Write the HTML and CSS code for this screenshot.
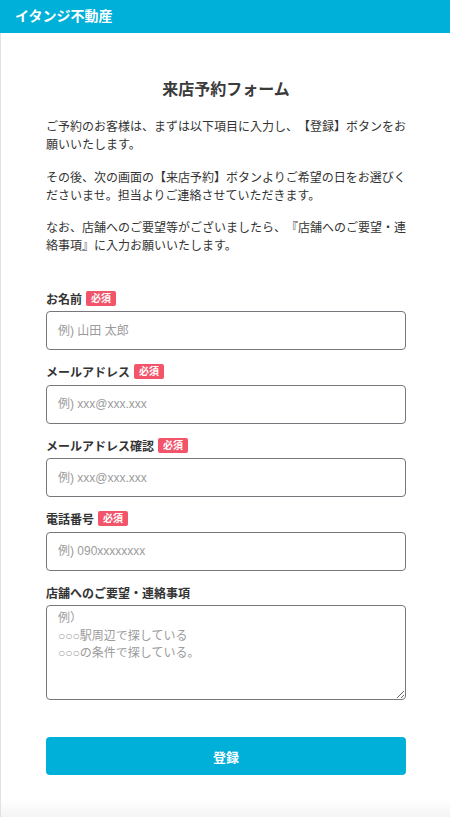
FILE: index.html
```html
<!DOCTYPE html>
<html lang="ja">
<head>
    <meta charset="UTF-8">
    <meta name="viewport" content="width=device-width, initial-scale=1.0">
    <title>来店予約フォーム | イタンジ不動産</title>
    <link rel="stylesheet" href="styles.css">
</head>
<body>
    <header class="site-header">イタンジ不動産</header>

    <main class="page">
        <div class="form-wrap">
            <h1 class="form-title">来店予約フォーム</h1>

            <div class="intro">
                <p>ご予約のお客様は、まずは以下項目に入力し、【登録】ボタンをお願いいたします。</p>
                <p>その後、次の画面の【来店予約】ボタンよりご希望の日をお選びくださいませ。担当よりご連絡させていただきます。</p>
                <p>なお、店舗へのご要望等がございましたら、『店舗へのご要望・連絡事項』に入力お願いいたします。</p>
            </div>

            <form class="form">
                <div class="field">
                    <label class="field-label" for="name">お名前<span class="badge">必須</span></label>
                    <input class="field-input" type="text" id="name" placeholder="例) 山田 太郎">
                </div>
                <div class="field">
                    <label class="field-label" for="email">メールアドレス<span class="badge">必須</span></label>
                    <input class="field-input" type="email" id="email" placeholder="例) xxx@xxx.xxx">
                </div>
                <div class="field">
                    <label class="field-label" for="email-confirm">メールアドレス確認<span class="badge">必須</span></label>
                    <input class="field-input" type="email" id="email-confirm" placeholder="例) xxx@xxx.xxx">
                </div>
                <div class="field">
                    <label class="field-label" for="tel">電話番号<span class="badge">必須</span></label>
                    <input class="field-input" type="tel" id="tel" placeholder="例) 090xxxxxxxx">
                </div>
                <div class="field">
                    <label class="field-label" for="note">店舗へのご要望・連絡事項</label>
                    <textarea class="field-input field-textarea" id="note" placeholder="例）&#10;○○○駅周辺で探している&#10;○○○の条件で探している。"></textarea>
                </div>

                <button class="submit" type="button">登録</button>
            </form>
        </div>
    </main>

    <div class="page-bottom"></div>
</body>
</html>
```

FILE: styles.css
```css
html, body {
    margin: 0;
    padding: 0;
}
body {
    font-family: "Liberation Sans", "Noto Sans CJK JP", sans-serif;
    color: #333;
    background: #fff;
    text-spacing-trim: space-all;
}
.site-header {
    height: 33px;
    line-height: 32px;
    padding: 0 15px;
    background-color: #00b0d8;
    color: #fff;
    font-size: 14px;
    font-weight: bold;
}
.page {
    border-left: 1px solid #e2e2e2;
    padding: 45px 0 25px;
}
.form-wrap {
    width: 360px;
    margin: 0 auto;
    padding-left: 1px;
}
.form-title {
    margin: 0 0 16px;
    font-size: 16px;
    line-height: 24px;
    text-align: center;
    color: #3a3a3a;
}
.intro {
    font-size: 12px;
    line-height: 18px;
}
.intro p {
    margin: 0 0 14.5px;
}
.intro p:last-child {
    margin-bottom: 0;
}
.form {
    margin-top: 34px;
}
.field {
    margin-bottom: 12.5px;
}
.field-label {
    display: flex;
    align-items: center;
    height: 18px;
    margin-bottom: 4px;
    font-size: 12px;
    font-weight: bold;
}
.badge {
    display: inline-block;
    margin-left: 4px;
    padding: 0 5px;
    height: 15px;
    line-height: 15px;
    border-radius: 2px;
    background-color: #f2546a;
    color: #fff;
    font-size: 10px;
    font-weight: bold;
}
.field-input {
    display: block;
    box-sizing: border-box;
    width: 100%;
    height: 39px;
    margin: 0;
    padding: 0 11px;
    border: 1px solid #77767c;
    border-radius: 4px;
    font-family: "Liberation Sans", "Noto Sans CJK JP", sans-serif;
    font-size: 12px;
    color: #333;
    background: #fff;
}
.field-input::placeholder {
    color: #9b9b9b;
}
.field-textarea {
    height: 95px;
    padding: 4px 11px;
    line-height: 17.5px;
}
.submit {
    display: block;
    width: 100%;
    height: 38px;
    margin-top: 37px;
    border: none;
    border-radius: 4px;
    background-color: #00b0d8;
    color: #fff;
    font-family: "Liberation Sans", "Noto Sans CJK JP", sans-serif;
    font-size: 13px;
    font-weight: bold;
    cursor: pointer;
}
.page-bottom {
    height: 20px;
    border-left: 1px solid #e2e2e2;
    background: linear-gradient(#fff, #f2f2f2);
}
```
